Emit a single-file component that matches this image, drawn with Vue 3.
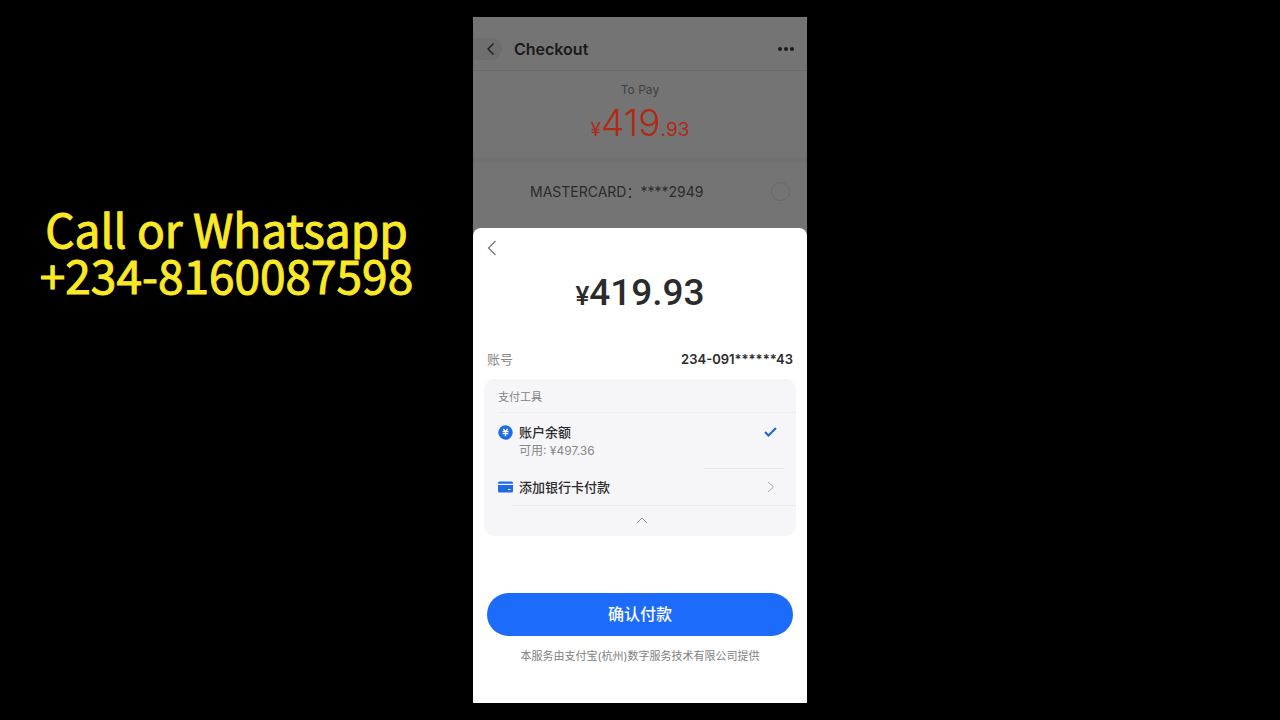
<script setup>
import { ref } from 'vue'

const contact = 'Call or Whatsapp\n+234-8160087598'
const card = ref(false)
</script>

<template>
  <main class="stage">
    <aside class="contact">
      <p>{{ contact }}</p>
    </aside>

    <div class="phone">
      <section class="checkout">
        <header class="bar">
          <button class="back" aria-label="Back">
            <svg width="9" height="14" viewBox="0 0 9 14"><path d="M7.500 1.500L2 7l5.500 5.500" /></svg>
          </button>
          <h1>Checkout</h1>
          <button class="more" aria-label="More">
            <svg width="18" height="6" viewBox="0 0 18 6"><circle cx="3" cy="3" r="2" /><circle cx="9" cy="3" r="2" /><circle cx="15" cy="3" r="2" /></svg>
          </button>
        </header>
        <div class="due">
          <p class="due-label">To Pay</p>
          <p class="due-sum"><span class="minor">¥</span>419<span class="minor">.93</span></p>
        </div>
        <div class="method">
          <label for="mastercard">MASTERCARD：****2949</label>
          <input id="mastercard" v-model="card" type="radio" name="method" :value="true" />
        </div>
      </section>

      <section class="sheet">
        <button class="close" aria-label="返回">
          <svg width="10" height="16" viewBox="0 0 10 16"><path d="M8.500 1L1.500 8l7 7" /></svg>
        </button>
        <p class="total"><span>¥</span>419.93</p>
        <div class="account">
          <span>账号</span>
          <strong>234-091******43</strong>
        </div>

        <div class="tools">
          <h2>支付工具</h2>
          <button class="tool balance">
            <svg class="coin" width="15" height="15" viewBox="0 0 15 15">
              <circle cx="7.500" cy="7.500" r="7.200" />
              <path d="M5.400 3.800l1.600 2M9.600 3.800l-1.600 2M4.600 6.500h5.800M4.600 8.700h5.800M7.500 6v5.200" />
            </svg>
            <span class="text"><b>账户余额</b><small>可用: ¥497.36</small></span>
            <svg class="tick" width="13" height="10" viewBox="0 0 13 10"><path d="M1 5l3.500 3.500L12 1" /></svg>
          </button>
          <button class="tool add">
            <svg class="bank" width="15" height="12" viewBox="0 0 15 12">
              <path d="M0 2.800V2Q0 .5 1.500 .5h12Q15 .5 15 2v.8z" />
              <path d="M0 4h15v6q0 1.500-1.500 1.500h-12Q0 11.500 0 10z" />
              <path class="mark" d="M10 8.500h2.500" />
            </svg>
            <span class="text"><b>添加银行卡付款</b></span>
            <svg class="next" width="8" height="12" viewBox="0 0 8 12"><path d="M1 1l5.500 5L1 11" /></svg>
          </button>
          <button class="fold" aria-label="收起">
            <svg width="12" height="7" viewBox="0 0 12 7"><path d="M1 6l5-5 5 5" /></svg>
          </button>
        </div>

        <button class="confirm">确认付款</button>
        <p class="note">本服务由支付宝(杭州)数字服务技术有限公司提供</p>
      </section>
    </div>
  </main>
</template>

<style>
body {
  background: #000;
}
</style>

<style scoped>
.stage {
  display: grid;
  grid-template-columns: 1fr minmax(280px, 334px) 1fr;
  box-sizing: border-box;
  min-height: 100vh;
  padding: 17px 0;
  background: #000;
  font-family: Inter, "Noto Sans CJK SC", sans-serif;
}
p, h1, h2 {
  margin: 0;
}
button {
  padding: 0;
  border: 0;
  background: none;
  color: inherit;
  font: inherit;
  text-align: left;
}
svg {
  display: block;
  flex: none;
  fill: none;
  stroke: currentColor;
}
.contact {
  padding: 188px 20px 0 0;
  color: #fbe925;
  font: 46px/46px "Noto Sans CJK SC", sans-serif;
  -webkit-text-stroke: 1px currentColor;
  text-align: center;
  white-space: pre-line;
}
.phone {
  display: flex;
  flex-direction: column;
  background: #747474;
}
.bar {
  display: flex;
  align-items: center;
  padding: 20px 12px 9px 0;
  border-bottom: 1px solid #6a6a6a;
  color: #1a1a1a;
}
.back {
  display: flex;
  align-items: center;
  justify-content: center;
  width: 29px;
  height: 22px;
  padding-left: 6px;
  border-radius: 0 11px 11px 0;
  background: #6e6e6e;
  box-sizing: border-box;
}
.back svg {
  stroke-width: 1.300;
}
h1 {
  flex: 1;
  margin-left: 12px;
  font-size: 16px;
  line-height: 24px;
  font-weight: 600;
}
.more svg {
  fill: currentColor;
  stroke: none;
}
.due {
  height: 76px;
  padding-top: 10px;
  border-bottom: 6px solid #717171;
  text-align: center;
}
.due-label {
  color: #404040;
  font-size: 12px;
  line-height: 18px;
}
.due-sum {
  color: #b02a14;
  font-size: 37px;
  line-height: 48px;
  font-weight: 300;
}
.minor {
  font-size: 19px;
  font-weight: 400;
}
.method {
  display: flex;
  align-items: center;
  justify-content: space-between;
  height: 56px;
  padding: 0 17px 9px 57px;
  color: #2b2b2b;
  font-size: 14px;
}
.method input {
  width: 19px;
  height: 19px;
  margin: 0;
  border: 1px solid #696969;
  border-radius: 50%;
  appearance: none;
}
.sheet {
  display: flex;
  flex: 1;
  flex-direction: column;
  padding: 12px 14px 0;
  border-radius: 8px 8px 0 0;
  background: #fff;
  color: #2b2b2b;
}
.close {
  align-self: flex-start;
  color: #777;
}
.close svg {
  stroke-width: 1.300;
}
.total {
  margin-top: 13px;
  font: 500 37px/48px Roboto, sans-serif;
  text-align: center;
}
.total span {
  font-size: 26px;
}
.account {
  display: flex;
  justify-content: space-between;
  margin-top: 29px;
  font-size: 13px;
  line-height: 20px;
}
.account span {
  color: #888;
}
.account strong {
  font-weight: 600;
}
.tools {
  margin: 10px -3px 0;
  border-radius: 10px;
  background: #f6f6f9;
}
h2 {
  margin-left: 14px;
  padding-top: 3px;
  border-bottom: 1px solid #eeeef1;
  color: #808080;
  font-size: 11px;
  line-height: 30px;
  font-weight: 400;
}
.tool {
  display: flex;
  width: 100%;
  padding: 0 19px 0 14px;
}
.text {
  flex: 1;
  margin-left: 6px;
}
b {
  display: block;
  font-size: 13px;
  line-height: 20px;
  font-weight: 500;
}
small {
  display: block;
  color: #888;
  font-size: 12px;
  line-height: 18px;
}
.balance {
  padding-top: 9px;
  padding-bottom: 8px;
}
.coin {
  margin-top: 3px;
  fill: #1f6be6;
  stroke: none;
}
.coin path {
  fill: none;
  stroke: #fff;
  stroke-width: 1.300;
}
.tick {
  margin-top: 5px;
  color: #1f66d2;
  stroke-width: 2;
}
.add {
  align-items: center;
  padding-top: 9px;
  padding-bottom: 8px;
  position: relative;
}
.add::before {
  position: absolute;
  top: 0;
  right: 12px;
  width: 80px;
  height: 1px;
  background: #e9eaec;
  content: "";
}
.bank {
  stroke: none;
  fill: #1f6be6;
}
.bank .mark {
  stroke: #fff;
}
.next {
  margin-right: 2px;
  color: #aaa;
}
.fold {
  display: flex;
  justify-content: center;
  width: calc(100% - 28px);
  margin-left: 28px;
  padding: 11px 25px 12px 0;
  border-top: 1px solid #ebecee;
  color: #999;
}
.confirm {
  margin-top: 57px;
  border-radius: 22px;
  background: #1c6bfa;
  color: #fff;
  font-size: 16px;
  line-height: 43px;
  font-weight: 500;
  text-align: center;
}
.note {
  margin: 10px 0 36px;
  color: #808080;
  font-size: 11px;
  line-height: 20px;
  text-align: center;
}
</style>
